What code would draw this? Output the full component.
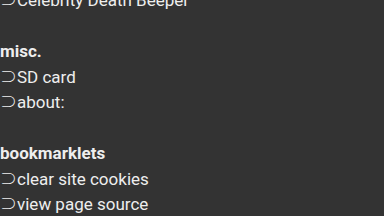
import React from 'react';

const sections = [
  { title: null, items: ['Celebrity Death Beeper'] },
  { title: 'misc.', items: ['SD card', 'about:'] },
  { title: 'bookmarklets', items: ['clear site cookies', 'view page source'] },
];

export default function App() {
  return (
    <div className="h-[216px] w-[384px] overflow-hidden bg-[#333333] font-['Roboto',sans-serif] text-[17px] leading-[25.5px] text-[#eeeeee]">
      <div className="-mt-[12px]">
        {sections.map((s, i) => (
          <div key={i} className={i > 0 ? 'mt-[25.5px]' : ''}>
            {s.title && <div className="font-bold">{s.title}</div>}
            {s.items.map((item) => (
              <div key={item}>
                <span className="font-['Noto_Sans_CJK_SC',sans-serif] font-light leading-none">⊃</span>
                {item}
              </div>
            ))}
          </div>
        ))}
      </div>
    </div>
  );
}
